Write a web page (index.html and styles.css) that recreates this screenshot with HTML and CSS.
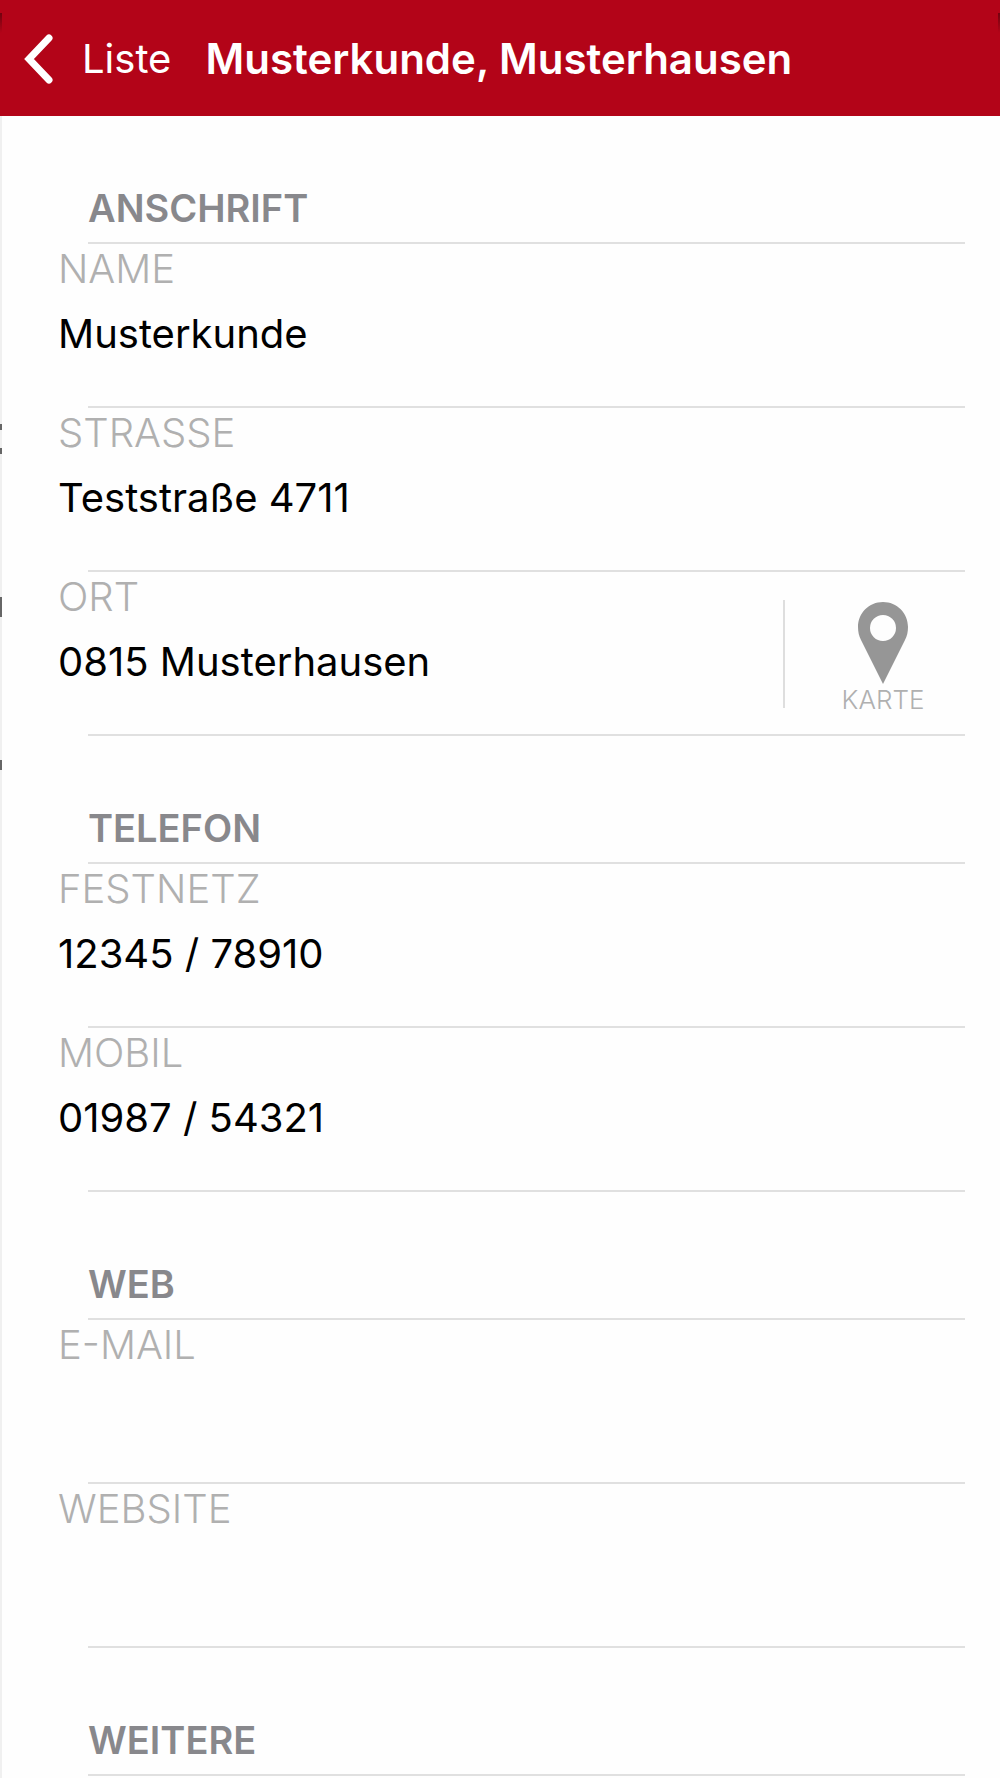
FILE: index.html
```html
<!DOCTYPE html>
<html lang="de">
<head>
  <meta charset="UTF-8" />
  <title>Musterkunde, Musterhausen</title>
  <meta name="viewport" content="width=device-width, initial-scale=1.0"/>
  <link rel="stylesheet" href="styles.css">
</head>
<body>

  <header class="navbar">
    <a class="back" href="#liste">
      <svg class="back-icon" viewBox="0 0 30 50" aria-hidden="true">
        <path d="M25 4 L5 25 L25 46" />
      </svg>
      Liste
    </a>
    <h1 class="title">Musterkunde, Musterhausen</h1>
  </header>

  <!-- edge of the list page below this one -->
  <div class="underlay"></div>

  <main>
    <section>
      <h2>Anschrift</h2>
      <dl>
        <div class="field">
          <dt>Name</dt>
          <dd>Musterkunde</dd>
        </div>
        <div class="field">
          <dt>Strasse</dt>
          <dd>Teststraße 4711</dd>
        </div>
        <div class="field with-action">
          <div>
            <dt>Ort</dt>
            <dd>0815 Musterhausen</dd>
          </div>
          <dd class="action">
            <button class="map-button" type="button">
              <svg class="pin" viewBox="0 0 50 82" aria-hidden="true">
                <path fill-rule="evenodd" d="M25 0 C11 0 0 11 0 25 C0 30 1 34 3 38 L25 82 L47 38 C49 34 50 30 50 25 C50 11 39 0 25 0 Z M25 13 A13 13 0 1 1 25 39 A13 13 0 1 1 25 13 Z" />
              </svg>
              Karte
            </button>
          </dd>
        </div>
      </dl>
    </section>

    <section>
      <h2>Telefon</h2>
      <dl>
        <div class="field">
          <dt>Festnetz</dt>
          <dd>12345 / 78910</dd>
        </div>
        <div class="field">
          <dt>Mobil</dt>
          <dd>01987 / 54321</dd>
        </div>
      </dl>
    </section>

    <section>
      <h2>Web</h2>
      <dl>
        <div class="field">
          <dt>E-Mail</dt>
          <dd></dd>
        </div>
        <div class="field">
          <dt>Website</dt>
          <dd></dd>
        </div>
      </dl>
    </section>

    <section>
      <h2>Weitere</h2>
    </section>
  </main>

</body>
</html>
```
FILE: styles.css
```css
* {
  box-sizing: border-box;
}

body {
  margin: 0;
  background: #fefefe;
  color: #000;
  font-family: Inter, "Liberation Sans", sans-serif;
  font-size: 40px;
  line-height: 48px;
}

h1, h2, dl, dd {
  margin: 0;
}

.navbar {
  display: flex;
  align-items: center;
  gap: 34px;
  height: 116px;
  padding: 2px 24px 0;
  background:
    linear-gradient(#70030f, #b30418) 0 13px / 2px 20px no-repeat,
    linear-gradient(#70030f, #b30418) 100% 13px / 2px 20px no-repeat,
    #b30418;
  color: #fff;
}

.back {
  display: flex;
  align-items: center;
  gap: 28px;
  color: inherit;
  text-decoration: none;
}

.back-icon {
  width: 30px;
  height: 50px;
  fill: none;
  stroke: #fff;
  stroke-width: 7;
  stroke-linecap: round;
  stroke-linejoin: miter;
}

.title {
  font-size: 42px;
  font-weight: 600;
  white-space: nowrap;
}

.underlay {
  position: absolute;
  top: 116px;
  bottom: 0;
  left: 0;
  width: 2px;
  background:
    linear-gradient(#666, #666) 0 308px / 2px 6px no-repeat,
    linear-gradient(#666, #666) 0 332px / 2px 6px no-repeat,
    linear-gradient(#666, #666) 0 481px / 2px 20px no-repeat,
    linear-gradient(#666, #666) 0 644px / 2px 10px no-repeat,
    #f0f0f0;
}

main {
  padding: 0 35px 0 58px;
}

h2 {
  height: 128px;
  margin-left: 30px;
  padding-top: 68px;
  border-bottom: 2px solid #e0e0e0;
  color: #88888c;
  font-size: 38px;
  font-weight: 600;
  text-transform: uppercase;
}

/* the rule starts further in than the text */
.field {
  height: 164px;
  background: linear-gradient(#e0e0e0, #e0e0e0) 30px 100% / 100% 2px no-repeat;
}

dt {
  padding-top: 1px;
  color: #b0b0b0;
  font-weight: 300;
  text-transform: uppercase;
}

dd {
  padding-top: 17px;
}

.with-action {
  display: flex;
  justify-content: space-between;
}

.action {
  width: 182px;
  height: 108px;
  margin-top: 28px;
  padding: 0 22px 0 38px;
  border-left: 2px solid #dedede;
}

.map-button {
  display: flex;
  flex-direction: column;
  align-items: center;
  gap: 1px;
  width: 100%;
  padding: 2px 0 0;
  border: 0;
  background: none;
  color: #b0b0b0;
  font-family: inherit;
  font-size: 26px;
  font-weight: 300;
  line-height: 30px;
  text-transform: uppercase;
  cursor: pointer;
}

.pin {
  width: 50px;
  height: 82px;
  fill: #969696;
}
```
